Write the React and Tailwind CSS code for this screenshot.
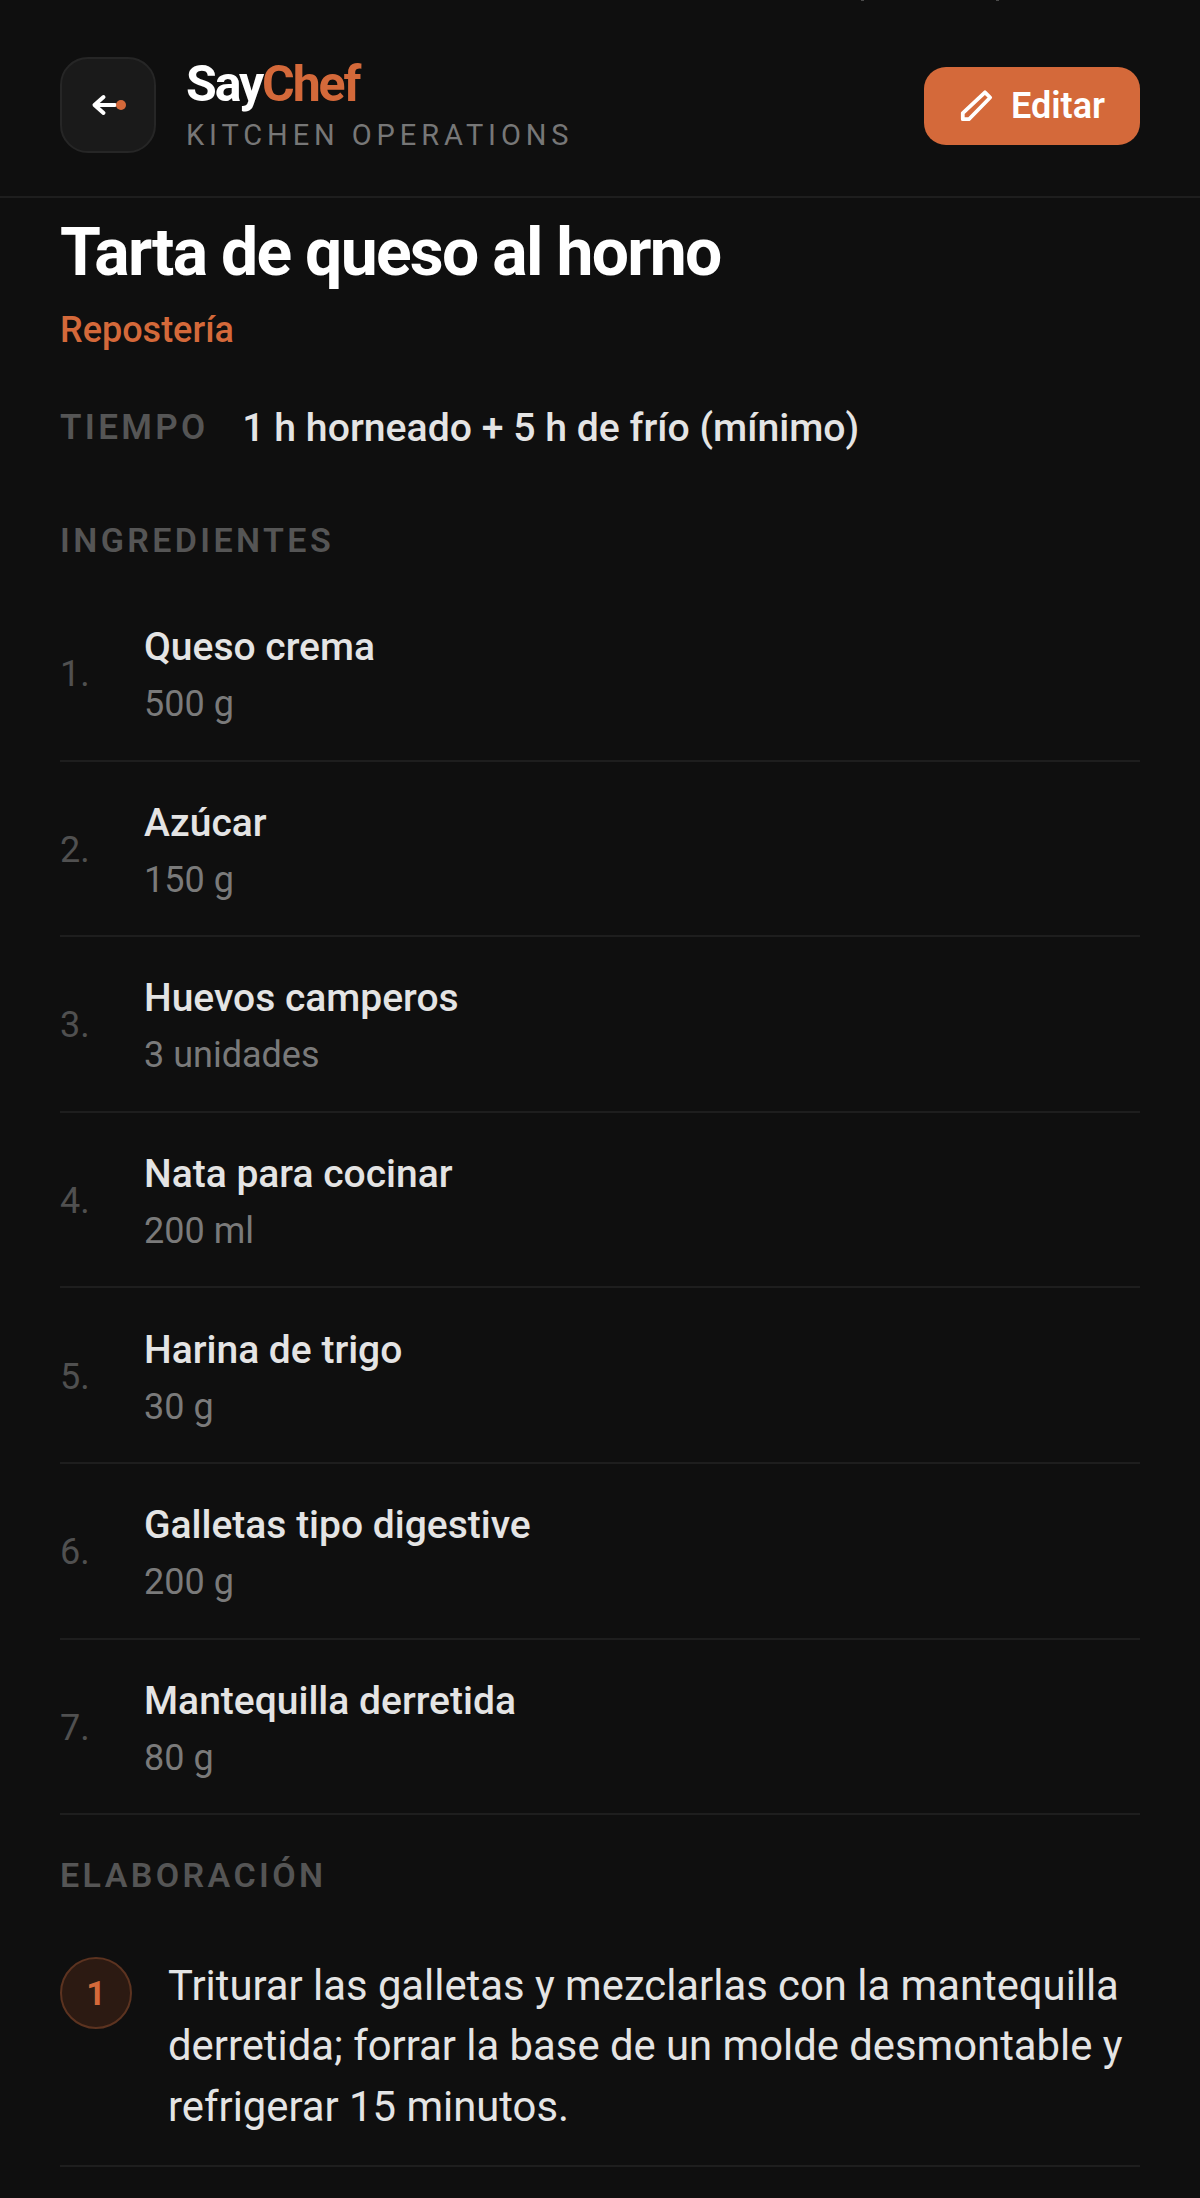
const ingredients = [
  ["Queso crema", "500 g"],
  ["Azúcar", "150 g"],
  ["Huevos camperos", "3 unidades"],
  ["Nata para cocinar", "200 ml"],
  ["Harina de trigo", "30 g"],
  ["Galletas tipo digestive", "200 g"],
  ["Mantequilla derretida", "80 g"],
];

function BackIcon() {
  return (
    <svg width="36" height="24" viewBox="0 0 36 24" fill="none">
      <path d="M13.5 4 L4.5 12 L13.5 20 M4.5 12 H25" stroke="#ffffff" strokeWidth="4" strokeLinecap="round" strokeLinejoin="round" />
      <circle cx="31" cy="12" r="5" fill="#d4693a" />
    </svg>
  );
}

function PencilIcon() {
  return (
    <svg width="34" height="34" viewBox="0 0 36 36" fill="none">
      <path d="M27.5 3.5 L33 9 L10.5 32 H4 V25.5 Z" stroke="#ffffff" strokeWidth="4" strokeLinejoin="round" />
    </svg>
  );
}

function SectionLabel({ children }) {
  return <h2 className="text-[34px] leading-[40px] font-semibold tracking-[3.4px] text-[#555555]">{children}</h2>;
}

export default function App() {
  return (
    <div className="relative h-[2198px] overflow-hidden bg-[#0f0f0f] font-['Roboto',sans-serif]">
      <span className="absolute top-0 left-[861px] h-[1px] w-[3px] bg-[#4a4a4a]"></span>
      <span className="absolute top-0 left-[996px] h-[1px] w-[3px] bg-[#4a4a4a]"></span>
      <header className="flex h-[198px] items-center justify-between border-b-2 border-[#1e1e1e] px-[60px] pt-[14px]">
        <div className="flex items-center gap-[30px]">
          <button className="flex h-[96px] w-[96px] items-center justify-center rounded-[28px] border-2 border-[#262626] bg-[#1a1a1a]">
            <BackIcon />
          </button>
          <div>
            <div className="text-[50px] leading-[54px] font-bold tracking-[-2.1px] text-white">
              Say<span className="text-[#d4693a]">Chef</span>
            </div>
            <div className="mt-[6px] text-[29px] leading-[36px] tracking-[4.9px] text-[#777777]">KITCHEN OPERATIONS</div>
          </div>
        </div>
        <button className="mt-[2px] flex h-[78px] w-[216px] items-center justify-center gap-[18px] rounded-[22px] bg-[#d4693a] text-[36px] font-semibold text-white">
          <PencilIcon />
          Editar
        </button>
      </header>
      <main className="px-[60px]">
        <h1 className="mt-[19px] text-[66px] leading-[72px] font-bold tracking-[-1.7px] text-white">Tarta de queso al horno</h1>
        <div className="mt-[19px] text-[36px] leading-[44px] font-medium text-[#d4693a]">Repostería</div>
        <div className="mt-[54px] flex items-center gap-[34px]">
          <span className="text-[35px] leading-[44px] font-semibold tracking-[3.3px] text-[#555555]">TIEMPO</span>
          <span className="text-[39.2px] leading-[44px] font-medium text-[#e4e4e4]">1 h horneado + 5 h de frío (mínimo)</span>
        </div>
        <div className="mt-[70px]">
          <SectionLabel>INGREDIENTES</SectionLabel>
        </div>
        <ul className="mt-[26px]">
          {ingredients.map(([name, amount], i) => (
            <li key={name} className="flex h-[175.6px] items-center border-b-2 border-[#1e1e1e]">
              <span className="w-[84px] pt-[3px] text-[36px] text-[#505050]">{i + 1}.</span>
              <div className="pt-[3px]">
                <div className="text-[39px] leading-[50px] font-medium text-[#e4e4e4]">{name}</div>
                <div className="mt-[10px] text-[36px] leading-[44px] text-[#7a7a7a]">{amount}</div>
              </div>
            </li>
          ))}
        </ul>
        <div className="mt-[40px]">
          <SectionLabel>ELABORACIÓN</SectionLabel>
        </div>
        <div className="mt-[61px] flex gap-[36px] border-b-2 border-[#1e1e1e] pb-[28px]">
          <span className="mt-[1px] flex h-[72px] w-[72px] shrink-0 items-center justify-center rounded-full border-2 border-[#5c3320] bg-[#2c1a12] text-[34px] font-bold text-[#d4693a]">1</span>
          <p className="text-[41.8px] leading-[60.3px] text-[#e4e4e4]">Triturar las galletas y mezclarlas con la mantequilla derretida; forrar la base de un molde desmontable y refrigerar 15 minutos.</p>
        </div>
      </main>
    </div>
  );
}
